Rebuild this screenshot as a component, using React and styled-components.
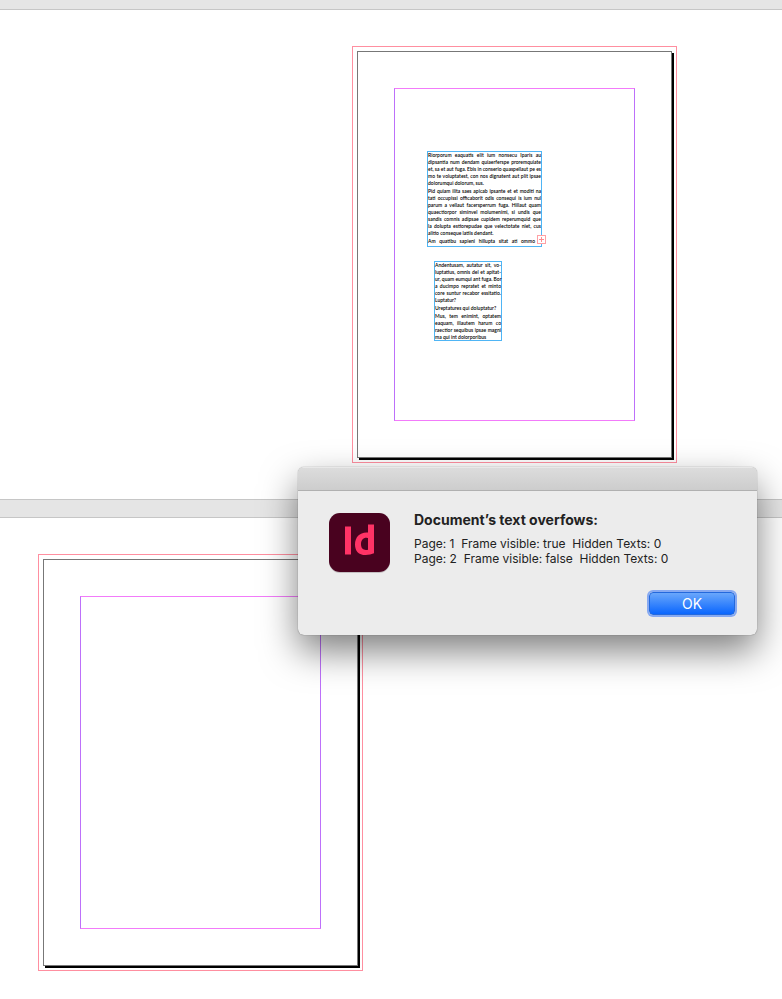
import React from 'react'
import styled, { createGlobalStyle } from 'styled-components'

const GlobalStyle = createGlobalStyle`
  * {
    box-sizing: border-box;
  }

  body {
    margin: 0;
    background-color: #fff;
    font-family: Inter, "Liberation Sans", sans-serif;
  }
`

const Workspace = styled.main`
  position: relative;
  min-height: 100vh;
  overflow: hidden;
`

const SpreadBar = styled.div`
  height: ${props => props.height};
  background-color: #e5e5e5;
  border-top: ${props => props.$topLine ? '1px solid #c6c6c6' : 'none'};
  border-bottom: 1px solid #c6c6c6;
`

const Spread = styled.section`
  display: flex;
  padding: 36px 0 36px ${props => props.$indent};
`

const Bleed = styled.div`
  flex: none;
  padding: 4px;
  border: 1px solid #ff8fa0;
`

const Page = styled.article`
  width: 315px;
  height: 407px;
  padding: 36px;
  border: 1px solid #777;
  background-color: #fff;
  box-shadow: 2px 2px 0 #000;
`

const Margins = styled.div`
  height: 333px;
  padding: 62px 0 0 32px;
  border: 1px solid;
  border-color: #f27bfa #bd70fa;
`

const TextFrame = styled.div`
  position: relative;
  width: ${props => props.width};
  height: ${props => props.height};
  margin: ${props => props.$gap || '0'};
  border: 1px solid #4fb5f5;
  color: #000;
  font-family: Lato, "Open Sans", sans-serif;
  font-size: 5px;
  font-weight: 600;
  line-height: 7px;
`

const Paragraph = styled.p`
  margin: 0 0 1px;
`

const Line = styled.span`
  display: block;
  white-space: nowrap;
  text-align-last: ${props => props.$last ? 'left' : 'justify'};
`

// the line that runs on into the overset mark
const OversetLine = styled(Line)`
  padding-right: 6px;
`

const Overset = styled.span`
  position: absolute;
  right: -5px;
  bottom: 2px;
  width: 9px;
  height: 9px;
  border: 1px solid #ffa0a4;
  background-color: #fff;

  svg {
    display: block;
  }
`

const Dialog = styled.section`
  position: absolute;
  top: 467px;
  right: 25px;
  width: 459px;
  border-radius: 6px;
  background-color: #ececec;
  box-shadow: 0 0 1px rgba(0, 0, 0, 0.6), 0 16px 36px rgba(0, 0, 0, 0.5);
  overflow: hidden;
`

const TitleBar = styled.div`
  height: 24px;
  border-top: 1px solid #e8e8e8;
  border-bottom: 1px solid #b0b0b0;
  background: linear-gradient(#dcdcdc, #cdcdcd);
`

const DialogBody = styled.div`
  display: flex;
  gap: 24px;
  padding: 20px 20px 18px 30px;
`

const AppIcon = styled.svg`
  flex: none;
  width: 62px;
  height: 62px;
`

const Message = styled.div`
  flex: 1;
  display: flex;
  flex-direction: column;
  color: #222;
`

const Heading = styled.h1`
  margin: 0 0 8px;
  font-size: 14px;
  font-weight: 700;
  line-height: 17px;
`

const Result = styled.p`
  margin: 0;
  font-size: 12px;
  line-height: 15px;
  white-space: pre;
`

const OkButton = styled.button`
  align-self: flex-end;
  width: 86px;
  height: 23px;
  margin: 26px 2px 2px 0;
  padding: 0;
  border: 1px solid #2469dc;
  border-radius: 4px;
  background: linear-gradient(#6aa7fb, #0a66fe);
  box-shadow: 0 0 0 2px #86a9f2;
  color: #fff;
  font-family: inherit;
  font-size: 14px;
  line-height: 21px;
`

const firstStory = [
  [
    'Riorporum eaquatis elit ium nonsecu Iparis au',
    'dipsantia num dendam quiaerferspe proremquiate',
    'et, sa et aut fuga. Ebis in conserio quaspellaut pe es',
    'mo te voluptatest, con nos dignatent aut plit ipsae',
    'dolorumqui dolorum, sus.',
  ],
  [
    'Pid quiam ilita saes apicab ipsante et et moditi na',
    'tati occupissi officaborit odis consequi is ium nul',
    'parum a vellaut facersperrum fuga. Hillaut quam',
    'quaectiorpor siminvel molumenimi, si undis que',
    'sandis comnis adipsae cupidem reperumquid que',
    'la dolupta estiorepudae que velectotate niet, cus',
    'alitio conseque latiis dendant.',
  ],
]

const secondStory = [
  [
    'Andentusam, autatur sit, vo-',
    'luptatius, omnis del et apitat-',
    'ur, quam eumqui ant fuga. Bor',
    'a ducimpo repratet et minto',
    'core suntur recabor essitatio.',
    'Luptatur?',
  ],
  ['Ureptatures qui doluptatur?'],
  [
    'Mus, tem enimint, optatem',
    'eaquam, illautem harum co',
    'raectior sequibus ipsae magni',
    'ma qui int dolorporibus',
  ],
]

const Story = ({ paragraphs }) => paragraphs.map(lines => (
  <Paragraph key={lines[0]}>
    {lines.map((line, i) => (
      <Line key={line} $last={i === lines.length - 1}>{line}</Line>
    ))}
  </Paragraph>
))

const App = () => {
  return (
    <>
      <GlobalStyle />
      <Workspace>
        <SpreadBar height="10px" />
        <Spread $indent="352px">
          <Bleed>
            <Page>
              <Margins>
                <TextFrame width="115px" height="96px">
                  <Story paragraphs={firstStory} />
                  <OversetLine>Am quatibu sapieni hillupta sitat ati ommo</OversetLine>
                  <Overset>
                    <svg width="7" height="7" viewBox="0 0 7 7">
                      <path d="M3.5 1v5M1 3.5h5" stroke="#ff8a90" />
                    </svg>
                  </Overset>
                </TextFrame>
                <TextFrame width="68px" height="80px" $gap="14px 0 0 7px">
                  <Story paragraphs={secondStory} />
                </TextFrame>
              </Margins>
            </Page>
          </Bleed>
        </Spread>
        <SpreadBar height="19px" $topLine />
        <Spread $indent="38px">
          <Bleed>
            <Page>
              <Margins />
            </Page>
          </Bleed>
        </Spread>

        <Dialog role="alertdialog" aria-labelledby="dialog-title">
          <TitleBar />
          <DialogBody>
            <AppIcon viewBox="0 0 62 62" aria-hidden="true">
              <rect x="1" y="2" width="61" height="60" rx="11" fill="#c4bfc1" />
              <rect x="1" y="2" width="61" height="59" rx="11" fill="#49021f" />
              <path d="M17 15.5h6v28h-6z" fill="#ff3366" />
              <path
                d="M40 13.5h6v28.8q-3.6 1.7-8.4 1.7C30.5 44 27 39.8 27 33.4C27 26.5 31.5 21.5 38.5 21.5q.8 0 1.5.1zM40 27q-.7-.3-1.7-.3c-3.2 0-5.3 2.5-5.3 6.4 0 4 1.9 5.9 5 5.9q1.2 0 2-.3z"
                fill="#ff3366"
                fillRule="evenodd"
              />
            </AppIcon>
            <Message>
              <Heading id="dialog-title">Document’s text overfows:</Heading>
              <Result>Page: 1  Frame visible: true  Hidden Texts: 0</Result>
              <Result>Page: 2  Frame visible: false  Hidden Texts: 0</Result>
              <OkButton type="button">OK</OkButton>
            </Message>
          </DialogBody>
        </Dialog>
      </Workspace>
    </>
  )
}

export default App
